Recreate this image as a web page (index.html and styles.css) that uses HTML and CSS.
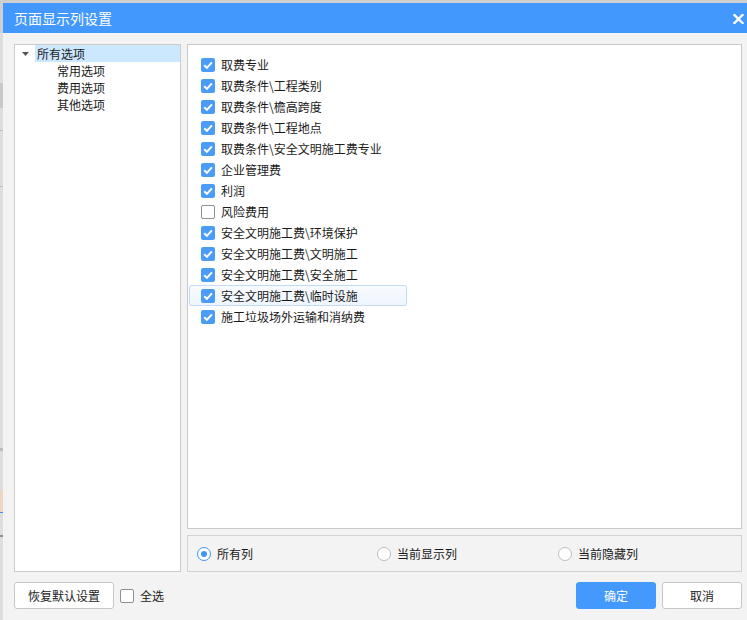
FILE: index.html
```html
<!DOCTYPE html>
<html lang="zh">
<head>
<meta charset="utf-8">
<title>页面显示列设置</title>
<link rel="stylesheet" href="styles.css">
</head>
<body>
<div class="desk">
  <div class="behind"></div>
  <div class="dialog">
    <div class="titlebar">
      <span class="title">页面显示列设置</span>
      <svg class="close" width="11" height="10" viewBox="0 0 11 10"><path d="M1.5 1 L9.5 9 M9.5 1 L1.5 9" stroke="#fff" stroke-width="2.4" stroke-linecap="square"/></svg>
    </div>
    <div class="body">
      <div class="main">
        <div class="tree">
          <div class="node root">
            <svg class="caret" width="7" height="4" viewBox="0 0 7 4"><path d="M0 0 H7 L3.5 4 Z" fill="#555"/></svg>
            <span class="label">所有选项</span>
          </div>
          <div class="node child">常用选项</div>
          <div class="node child">费用选项</div>
          <div class="node child">其他选项</div>
        </div>
        <div class="right">
          <div class="list">
            <div class="row"><span class="cb on"><svg width="14" height="14" viewBox="0 0 14 14"><path d="M3.2 7.3 L5.9 9.8 L10.9 4.3" fill="none" stroke="#fff" stroke-width="2"/></svg></span><span>取费专业</span></div>
            <div class="row"><span class="cb on"><svg width="14" height="14" viewBox="0 0 14 14"><path d="M3.2 7.3 L5.9 9.8 L10.9 4.3" fill="none" stroke="#fff" stroke-width="2"/></svg></span><span>取费条件\工程类别</span></div>
            <div class="row"><span class="cb on"><svg width="14" height="14" viewBox="0 0 14 14"><path d="M3.2 7.3 L5.9 9.8 L10.9 4.3" fill="none" stroke="#fff" stroke-width="2"/></svg></span><span>取费条件\檐高跨度</span></div>
            <div class="row"><span class="cb on"><svg width="14" height="14" viewBox="0 0 14 14"><path d="M3.2 7.3 L5.9 9.8 L10.9 4.3" fill="none" stroke="#fff" stroke-width="2"/></svg></span><span>取费条件\工程地点</span></div>
            <div class="row"><span class="cb on"><svg width="14" height="14" viewBox="0 0 14 14"><path d="M3.2 7.3 L5.9 9.8 L10.9 4.3" fill="none" stroke="#fff" stroke-width="2"/></svg></span><span>取费条件\安全文明施工费专业</span></div>
            <div class="row"><span class="cb on"><svg width="14" height="14" viewBox="0 0 14 14"><path d="M3.2 7.3 L5.9 9.8 L10.9 4.3" fill="none" stroke="#fff" stroke-width="2"/></svg></span><span>企业管理费</span></div>
            <div class="row"><span class="cb on"><svg width="14" height="14" viewBox="0 0 14 14"><path d="M3.2 7.3 L5.9 9.8 L10.9 4.3" fill="none" stroke="#fff" stroke-width="2"/></svg></span><span>利润</span></div>
            <div class="row"><span class="cb off"></span><span>风险费用</span></div>
            <div class="row"><span class="cb on"><svg width="14" height="14" viewBox="0 0 14 14"><path d="M3.2 7.3 L5.9 9.8 L10.9 4.3" fill="none" stroke="#fff" stroke-width="2"/></svg></span><span>安全文明施工费\环境保护</span></div>
            <div class="row"><span class="cb on"><svg width="14" height="14" viewBox="0 0 14 14"><path d="M3.2 7.3 L5.9 9.8 L10.9 4.3" fill="none" stroke="#fff" stroke-width="2"/></svg></span><span>安全文明施工费\文明施工</span></div>
            <div class="row"><span class="cb on"><svg width="14" height="14" viewBox="0 0 14 14"><path d="M3.2 7.3 L5.9 9.8 L10.9 4.3" fill="none" stroke="#fff" stroke-width="2"/></svg></span><span>安全文明施工费\安全施工</span></div>
            <div class="row hover"><span class="cb on"><svg width="14" height="14" viewBox="0 0 14 14"><path d="M3.2 7.3 L5.9 9.8 L10.9 4.3" fill="none" stroke="#fff" stroke-width="2"/></svg></span><span>安全文明施工费\临时设施</span></div>
            <div class="row"><span class="cb on"><svg width="14" height="14" viewBox="0 0 14 14"><path d="M3.2 7.3 L5.9 9.8 L10.9 4.3" fill="none" stroke="#fff" stroke-width="2"/></svg></span><span>施工垃圾场外运输和消纳费</span></div>
          </div>
          <div class="radios">
            <div class="radio-item"><span class="radio sel"></span><span>所有列</span></div>
            <div class="radio-item"><span class="radio"></span><span>当前显示列</span></div>
            <div class="radio-item third"><span class="radio"></span><span>当前隐藏列</span></div>
          </div>
        </div>
      </div>
      <div class="footer">
        <button class="btn">恢复默认设置</button>
        <label class="selall"><span class="cb off"></span><span>全选</span></label>
        <button class="btn primary push">确定</button>
        <button class="btn">取消</button>
      </div>
    </div>
  </div>
</div>
</body>
</html>
```

FILE: styles.css
```css
* { box-sizing: border-box; }
body {
  margin: 0;
  background: #cfcfcf;
  font-family: "Noto Sans CJK SC", "Microsoft YaHei", sans-serif;
  font-size: 12px;
  color: #1a1a1a;
}
.desk {
  width: 747px;
  height: 620px;
  display: flex;
  overflow: hidden;
}
.behind {
  width: 3px;
  flex: none;
  background: linear-gradient(to bottom,
    #cfcfcf 0, #cfcfcf 33px,
    #dedede 33px, #dedede 83px,
    #c9c9c9 83px, #c9c9c9 108px,
    #dedede 108px, #dedede 130px,
    #bdbdbd 130px, #bdbdbd 131px,
    #dedede 131px, #dedede 186px,
    #bdbdbd 186px, #bdbdbd 187px,
    #dedede 187px, #dedede 448px,
    #bcbcbc 448px, #bcbcbc 451px,
    #dedede 451px, #dedede 490px,
    #ecd7c0 490px, #ecd7c0 512px,
    #3d8ff0 512px, #3d8ff0 513px,
    #dedede 513px, #dedede 535px,
    #8d8d8d 535px, #8d8d8d 537px,
    #dedede 537px);
}
.dialog {
  margin-top: 3px;
  flex: 1;
  display: flex;
  flex-direction: column;
  background: #f3f3f3;
}
.titlebar {
  height: 30px;
  flex: none;
  background: #4298fd;
  color: #fff;
  font-size: 14px;
  line-height: 30px;
  display: flex;
  align-items: center;
  justify-content: space-between;
  padding: 0 3px 0 11px;
}
.close { display: block; margin-top: 1px; }
.body {
  padding: 11px 5px 0 11px;
}
.main {
  display: flex;
  gap: 6px;
  height: 528px;
}
.tree {
  width: 167px;
  flex: none;
  border: 1px solid #cbcbcb;
  background: #fff;
}
.node {
  height: 17px;
  line-height: 17px;
  white-space: nowrap;
}
.root {
  display: flex;
  align-items: center;
  padding-left: 7px;
}
.caret { display: block; flex: none; }
.root .label {
  flex: 1;
  margin-left: 6px;
  padding-left: 2px;
  background: #cce8ff;
}
.child { padding-left: 42px; }
.right {
  flex: 1;
  display: flex;
  flex-direction: column;
  gap: 6px;
}
.list {
  height: 485px;
  border: 1px solid #c9c9c9;
  background: #fff;
  padding-top: 9px;
}
.row {
  width: 218px;
  height: 21px;
  margin-left: 1px;
  border: 1px solid transparent;
  border-radius: 2px;
  padding-left: 11px;
  display: flex;
  align-items: center;
  gap: 6px;
  line-height: 19px;
  white-space: nowrap;
}
.row.hover {
  background: linear-gradient(to bottom, #f8fbff, #eef5fe);
  border-color: #c3daf6;
}
.cb {
  width: 14px;
  height: 14px;
  flex: none;
  border-radius: 2px;
  display: block;
}
.cb svg { display: block; }
.cb.on { background: #4a9cf7; }
.cb.off { background: #fff; border: 1px solid #8f8f8f; }
.radios {
  height: 37px;
  border: 1px solid #d2d2d2;
  background: #f3f3f3;
  display: flex;
  align-items: center;
  padding-left: 9px;
}
.radio-item {
  width: 180px;
  display: flex;
  align-items: center;
  gap: 6px;
}
.radio-item.third { margin-left: 1px; }
.radio {
  width: 14px;
  height: 14px;
  border-radius: 50%;
  border: 1px solid #bdbdbd;
  background: #fff;
  display: flex;
  align-items: center;
  justify-content: center;
  flex: none;
}
.radio.sel { border-color: #3f95f6; }
.radio.sel::after {
  content: "";
  width: 6px;
  height: 6px;
  border-radius: 50%;
  background: #3f95f6;
}
.footer {
  margin-top: 10px;
  display: flex;
  align-items: center;
}
.btn {
  width: 100px;
  height: 27px;
  border: 1px solid #c6c6c6;
  border-radius: 3px;
  background: #fff;
  font-family: inherit;
  font-size: 12px;
  color: #222;
  padding: 0;
  line-height: 25px;
}
.selall {
  margin-left: 6px;
  display: flex;
  align-items: center;
  gap: 6px;
}
.push { margin-left: auto; margin-right: 6px; }
.btn.primary, .btn.push + .btn { width: 80px; }
.btn.primary {
  background: #4399fd;
  border-color: #4399fd;
  color: #fff;
}
```
